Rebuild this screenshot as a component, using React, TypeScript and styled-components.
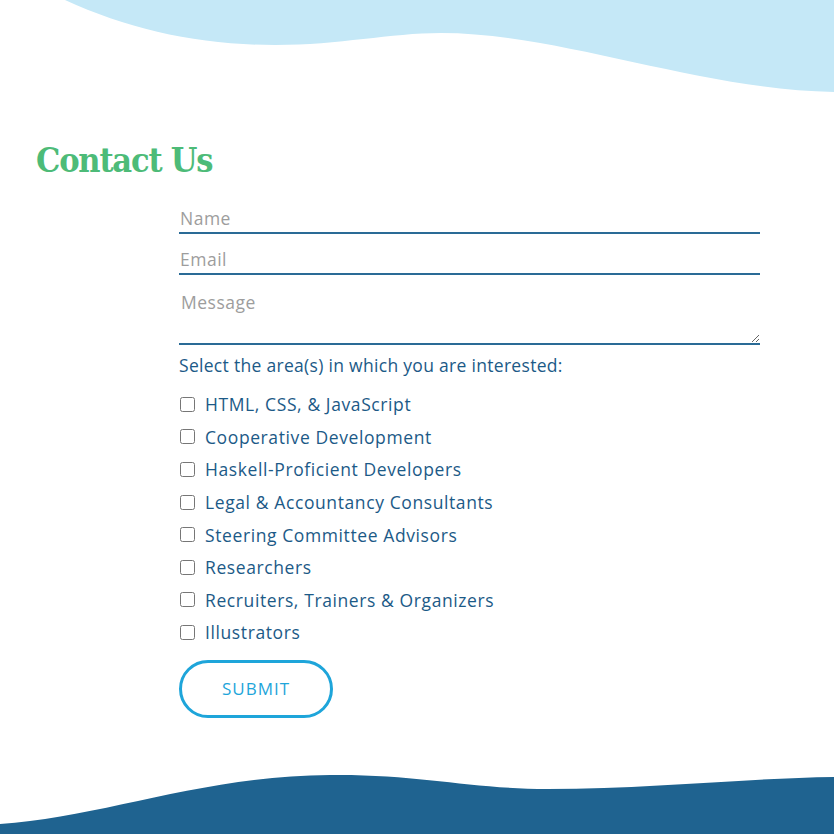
import React from "react";
import styled, { createGlobalStyle } from "styled-components";

const areas = [
  "HTML, CSS, & JavaScript",
  "Cooperative Development",
  "Haskell-Proficient Developers",
  "Legal & Accountancy Consultants",
  "Steering Committee Advisors",
  "Researchers",
  "Recruiters, Trainers & Organizers",
  "Illustrators",
];

function App() {
  return (
    <Page>
      <GlobalStyle />
      <TopWave viewBox="0 0 834 92" preserveAspectRatio="none">
        <path d="M65 0 C 130 30, 200 45, 275 45 C 340 45, 390 33, 441 33 C 560 33, 700 90, 834 92 L834 0 Z" />
      </TopWave>
      <Heading>Contact Us</Heading>
      <Form onSubmit={(e) => e.preventDefault()}>
        <Field type="text" placeholder="Name" />
        <Field type="email" placeholder="Email" />
        <Message placeholder="Message" />
        <Prompt>Select the area(s) in which you are interested:</Prompt>
        <List>
          {areas.map((a) => (
            <Row key={a}>
              <Box type="checkbox" />
              <span>{a}</span>
            </Row>
          ))}
        </List>
        <Submit type="submit">SUBMIT</Submit>
      </Form>
      <BottomWave viewBox="0 774 834 60" preserveAspectRatio="none">
        <path d="M0 824 C 100 818, 200 776, 330 775 C 420 774, 470 789, 548 789 C 650 789, 750 778, 834 777 L834 834 L0 834 Z" />
      </BottomWave>
    </Page>
  );
}

export default App;

const GlobalStyle = createGlobalStyle`
  * { box-sizing: border-box; }
  body {
    margin: 0;
    background: #fff;
    font-family: "Open Sans", Lato, sans-serif;
  }
`;

const Page = styled.div`
  width: 834px;
  height: 834px;
  display: flex;
  flex-direction: column;
  overflow: hidden;
`;

const TopWave = styled.svg`
  display: block;
  width: 834px;
  height: 92px;
  flex-shrink: 0;
  fill: #c5e8f7;
`;

const BottomWave = styled.svg`
  display: block;
  width: 834px;
  height: 60px;
  margin-top: auto;
  flex-shrink: 0;
  fill: #1f6390;
`;

const Heading = styled.h1`
  margin: 46px 0 0 36px;
  height: 44px;
  line-height: 44px;
  font-family: "DejaVu Serif", serif;
  font-stretch: condensed;
  font-weight: 700;
  font-size: 34px;
  letter-spacing: -1.2px;
  color: #4dbb78;
`;

const Form = styled.form`
  margin: 11px 0 0 179px;
  width: 581px;
  display: flex;
  flex-direction: column;
  align-items: flex-start;
`;

const Field = styled.input`
  width: 100%;
  height: 41px;
  padding: 12px 1px 1px;
  border: none;
  border-bottom: 2px solid #2a6b96;
  outline: none;
  font-family: "Open Sans", sans-serif;
  font-size: 17.5px;
  letter-spacing: 0.5px;
  line-height: 26px;
  color: #333;
  background: transparent;

  &::placeholder {
    color: #9d9d9d;
  }
`;

const Message = styled.textarea`
  width: 100%;
  height: 70px;
  padding: 14px 2px 0;
  border: none;
  border-bottom: 2px solid #2a6b96;
  outline: none;
  font-family: "Open Sans", sans-serif;
  font-size: 17.5px;
  letter-spacing: 0.5px;
  line-height: 26px;
  color: #333;
  background: transparent;

  &::placeholder {
    color: #9d9d9d;
  }
`;

const Prompt = styled.p`
  margin: 9px 0 0;
  font-size: 17.5px;
  letter-spacing: 0.3px;
  line-height: 22px;
  color: #1c5a87;
`;

const List = styled.div`
  margin-top: 12px;
  display: flex;
  flex-direction: column;
`;

const Row = styled.label`
  height: 32.6px;
  display: flex;
  align-items: center;
  gap: 10px;
  font-size: 17.5px;
  letter-spacing: 0.6px;
  color: #1c5a87;
`;

const Box = styled.input`
  width: 15px;
  height: 15px;
  margin: 0 0 0 1px;
`;

const Submit = styled.button`
  margin-top: 11px;
  width: 154px;
  height: 58px;
  border: 3px solid #1ea5da;
  border-radius: 29px;
  background: #fff;
  color: #1ea5da;
  font-family: "Open Sans", sans-serif;
  font-size: 17px;
  letter-spacing: 1px;
  cursor: pointer;
`;
